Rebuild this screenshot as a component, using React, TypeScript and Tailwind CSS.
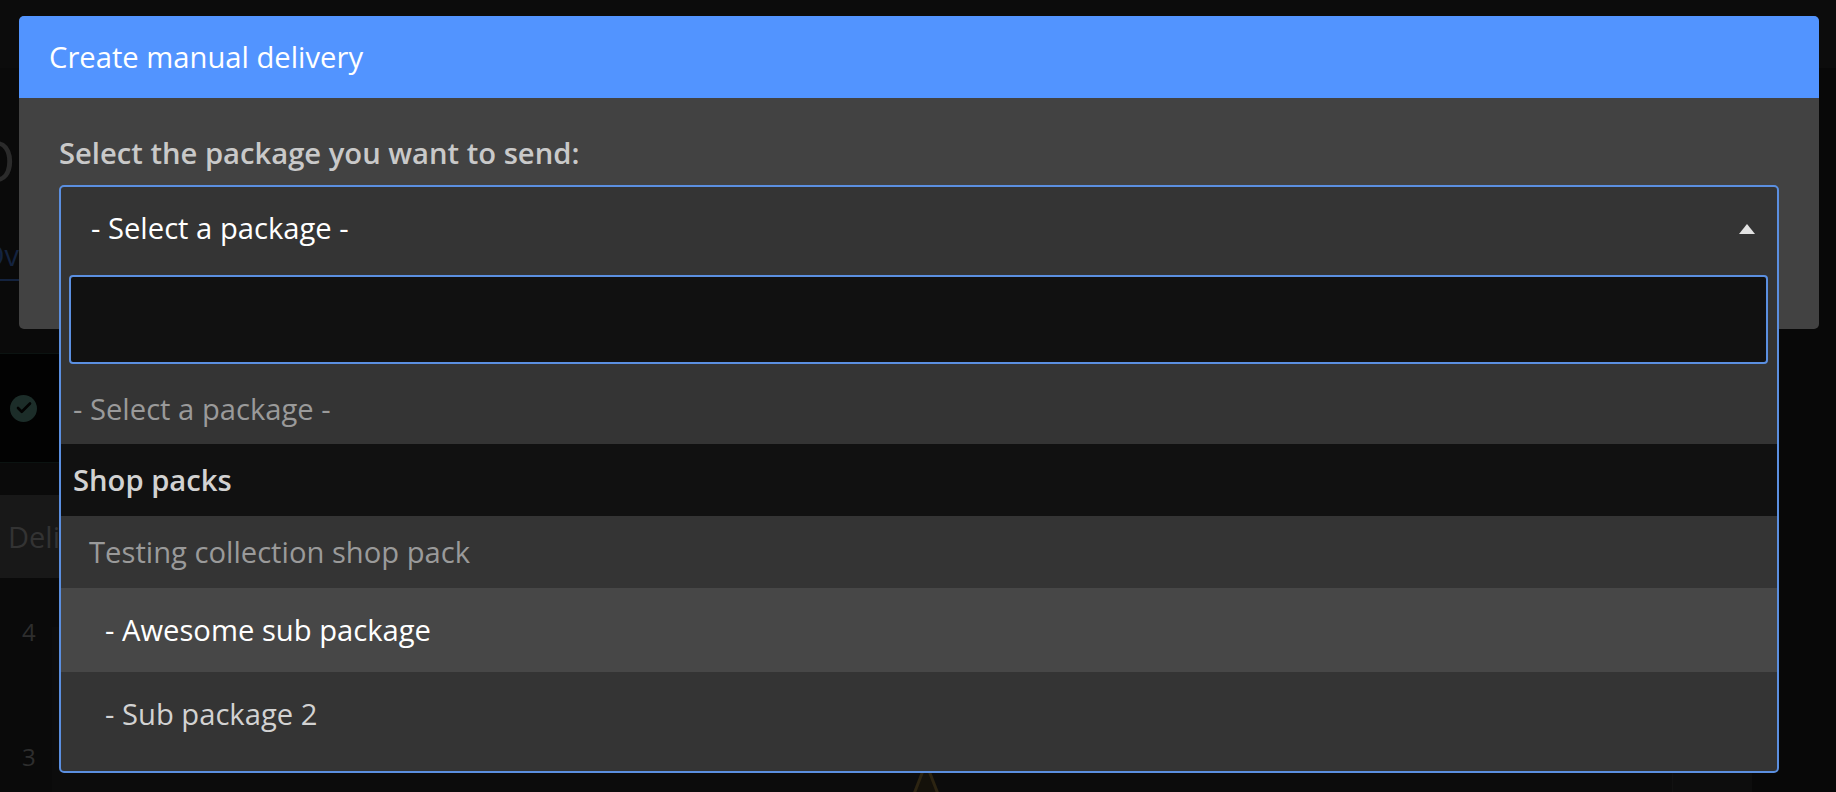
import { Check } from 'lucide-react';

// the page underneath, dimmed by the modal backdrop
const Page = () => (
  <div className="h-[792px] overflow-hidden bg-[#080808]">
    <div className="h-[68px] bg-[#0c0c0c]" />
    <div className="flex">
      <div className="w-[1752px] shrink-0 bg-[#0a0a0a]">
        <div className="h-[285px]">
          <div className="-ml-[28px] pt-[64px] text-[56px] leading-[56px] text-[#2b2b2b]">O</div>
          <div className="mt-[50px] w-[120px] border-b-2 border-[#14233f] pb-[7px] text-[29px] leading-[34px] text-[#14233f]">
            <span className="-ml-[18px] block">Ov</span>
          </div>
        </div>
        <div className="flex h-[110px] items-center border-y border-[#0b1311] bg-[#020202] pl-[10px]">
          <div className="flex h-[27px] w-[27px] items-center justify-center rounded-full bg-[#1c2d29]">
            <Check size={18} strokeWidth={3.5} className="text-[#020202]" />
          </div>
        </div>
        <div className="h-[32px]" />
        <div className="flex h-[83px] items-center bg-[#181818] pl-[8px] text-[29px] text-[#333333]">Deli</div>
        <div className="flex">
          <div className="w-[52px] pl-[22px] pt-[37px] text-[24px] leading-[34px] text-[#2e2e2e]">
            <div>4</div>
            <div className="mt-[91px]">3</div>
          </div>
          <div className="mt-[49px] h-[170px] w-[1620px] bg-[#0c0c0c] pl-[860px] pt-[135px]">
            <svg width="28" height="32" viewBox="0 0 28 32" fill="none">
              <path d="M14 1 L2 32 H26 Z" fill="#14110a" stroke="#2c2412" strokeWidth="3" />
            </svg>
          </div>
          <div className="mt-[49px] h-[170px] flex-1 border-l border-[#111111] bg-[#0d0d0d]" />
        </div>
      </div>
    </div>
  </div>
);

const App = () => {
  return (
    <div className="relative h-[792px] w-[1836px] overflow-hidden font-['Open_Sans',sans-serif]">
      <Page />

      <div className="absolute inset-0 pl-[19px] pr-[17px] pt-[16px]">
        <div className="h-[313px] rounded-[5px] bg-[#424242]">
          <div className="flex h-[82px] items-center rounded-t-[5px] bg-[#5294ff] px-[30px] pt-[2px] text-[29.2px] text-white">
            Create manual delivery
          </div>
          <div className="px-[40px] pt-[35px]">
            <label className="block text-[29.2px] leading-[40px] font-semibold text-[#c9c9c9]">
              Select the package you want to send:
            </label>
            <div className="mt-[12px] h-[588px] rounded-[5px] border-2 border-[#5b8fe0] bg-[#343434] text-[29.2px]">
              <div className="flex h-[88px] items-center justify-between pb-[4px] pl-[30px] pr-[22px] text-white">
                <span>- Select a package -</span>
                <span className="h-0 w-0 border-x-[8px] border-b-[10px] border-x-transparent border-b-[#e2e2e2]" />
              </div>
              <div className="ml-[8px] mr-[9px] h-[89px] rounded-[4px] border-2 border-[#5b8fe0] bg-[#111111]" />
              <div className="flex h-[80px] items-center pl-[12px] pt-[12px] text-[#9a9a9a]">- Select a package -</div>
              <div className="flex h-[72px] items-center bg-[#111111] pl-[12px] pt-[2px] font-semibold text-[#d2d2d2]">Shop packs</div>
              <div className="flex h-[72px] items-center pl-[28px] pt-[2px] text-[#9a9a9a]">Testing collection shop pack</div>
              <div className="flex h-[84px] items-center bg-[#474747] pl-[44px] pt-[2px] text-white">- Awesome sub package</div>
              <div className="flex h-[84px] items-center pl-[44px] pt-[2px] text-[#d2d2d2]">- Sub package 2</div>
            </div>
          </div>
        </div>
      </div>
    </div>
  );
};

export default App;
